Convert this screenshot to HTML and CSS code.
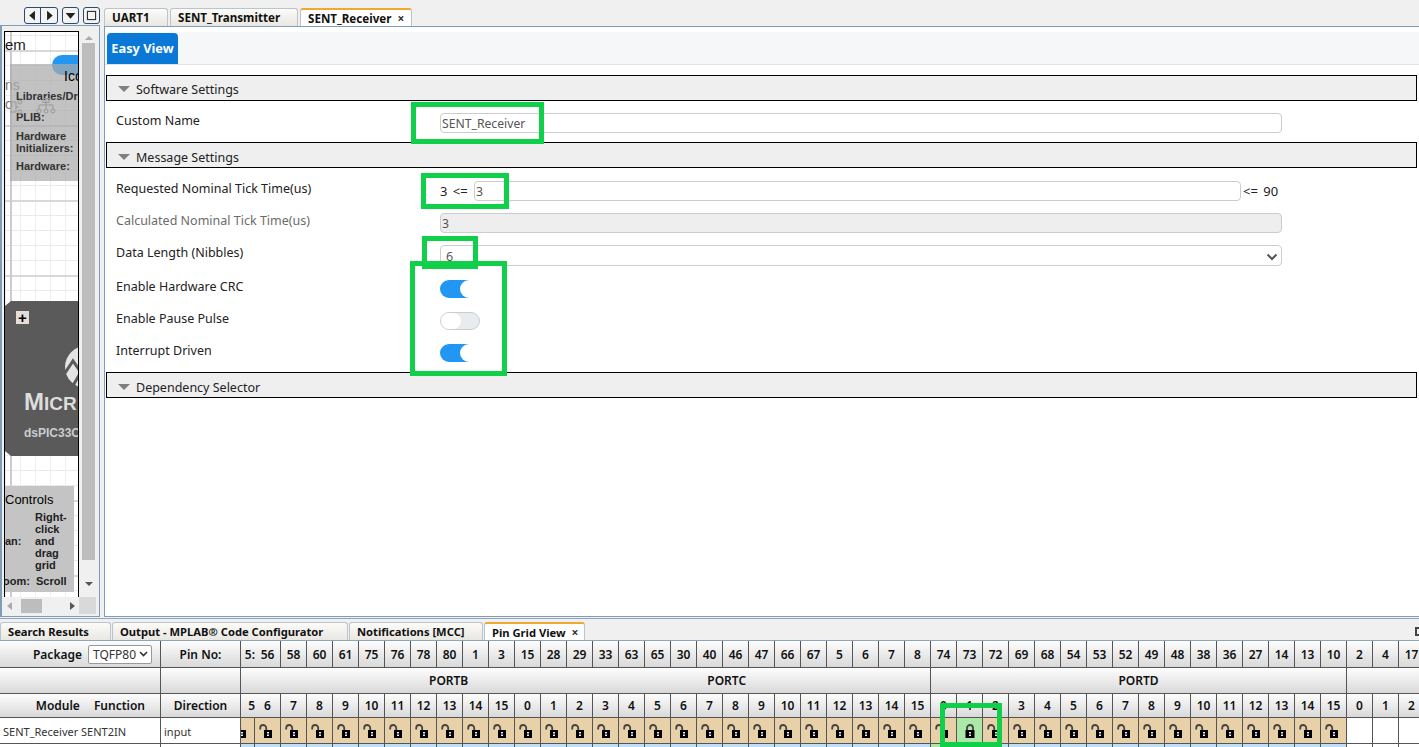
FILE: index.html
```html
<!DOCTYPE html>
<html lang="en">
<head>
    <meta charset="UTF-8">
    <meta name="viewport" content="width=device-width, initial-scale=1.0">
    <title>MPLAB Code Configurator</title>
    <link rel="stylesheet" href="styles.css">
</head>
<body>
    <div class="workspace">
        <div class="nav-pane">
            <div class="nav-tools">
                <div class="tool-group">
                    <button class="tool-btn" title="Back"><svg viewBox="0 0 16 16"><path d="M11 2v12L4 8z"></path></svg></button>
                    <button class="tool-btn" title="Forward"><svg viewBox="0 0 16 16"><path d="M5 2v12l7-6z"></path></svg></button>
                </div>
                <button class="tool-btn single" title="Menu"><svg viewBox="0 0 16 16"><path d="M2 5h12L8 12z"></path></svg></button>
                <button class="tool-btn single" title="Maximize"><svg viewBox="0 0 16 16"><rect x="3" y="3" width="10" height="10" fill="none" stroke="#333" stroke-width="1.4"></rect></svg></button>
            </div>
            <div class="nav-box">
                <div class="canvas">
                    <span class="canvas-title">em</span>
                    <span class="canvas-pill"></span>
                    <span class="canvas-ghost ghost-a">ns</span>
                    <span class="canvas-ghost ghost-b">o</span>
                    <div class="chip">
                        <span class="chip-plus">+</span>
                        <svg class="chip-mark" viewBox="0 0 30 44"><circle cx="22" cy="22" r="21" fill="#e4e4e4"></circle><path d="M-1 31L9 16l12 17M6 46l8-14 9 13" fill="none" stroke="#5a5a5a" stroke-width="3"></path></svg>
                        <span class="chip-brand">MICR</span>
                        <span class="chip-part">dsPIC33C</span>
                    </div>
                    <div class="resources">
                        <div class="res-head">Ico</div>
                        <div class="res-line">Libraries/Dri</div>
                        <div class="res-line plib">PLIB:</div>
                        <div class="res-line hw">Hardware<br>Initializers:</div>
                        <div class="res-line hw2">Hardware:</div>
                        <svg class="tree-icon tree-a" viewBox="0 0 20 16"><path d="M10 1v5M3 11V7h14v4M10 6v5" fill="none" stroke="#999"></path><rect x="7" y="0.5" width="6" height="4" fill="none" stroke="#999"></rect><circle cx="3" cy="13" r="2" fill="none" stroke="#999"></circle><circle cx="10" cy="13" r="2" fill="none" stroke="#999"></circle><circle cx="17" cy="13" r="2" fill="none" stroke="#999"></circle></svg>
                        <svg class="tree-icon tree-b" viewBox="0 0 13 16"><path d="M0 3h6v10H0M6 8h3" fill="none" stroke="#999"></path><circle cx="10" cy="3" r="2" fill="none" stroke="#999"></circle><circle cx="10" cy="13" r="2" fill="none" stroke="#999"></circle></svg>
                    </div>
                    <div class="controls">
                        <div class="controls-head">Controls</div>
                        <div class="controls-row pan"><span>an:</span><span>Right-<br>click<br>and<br>drag<br>grid</span></div>
                        <div class="controls-row zoom"><span>oom:</span><span>Scroll</span></div>
                    </div>
                </div>
                <div class="vscroll">
                    <span class="arrow-up"></span>
                    <span class="vthumb"></span>
                    <span class="arrow-down"></span>
                </div>
                <div class="hscroll">
                    <span class="arrow-left"></span>
                    <span class="hthumb"></span>
                    <span class="arrow-right"></span>
                    <span class="corner"></span>
                </div>
            </div>
        </div>

        <div class="editor">
            <div class="tabs top-tabs">
                <div class="tab tab-uart">UART1</div>
                <div class="tab tab-tx">SENT_Transmitter</div>
                <div class="tab tab-rx active">SENT_Receiver <span class="tab-close">×</span></div>
            </div>
            <div class="editor-body">
                <div class="view-strip">
                    <div class="view-tab">Easy View</div>
                </div>

                <div class="section-head"><span class="caret"></span>Software Settings</div>
                <div class="form-body first">
                    <div class="form-row">
                        <label>Custom Name</label>
                        <input class="field" value="SENT_Receiver">
                    </div>
                </div>

                <div class="section-head"><span class="caret"></span>Message Settings</div>
                <div class="form-body second">
                    <div class="form-row">
                        <label>Requested Nominal Tick Time(us)</label>
                        <div class="range-field">
                            <span class="range-min">3 &lt;=</span>
                            <input class="field" value="3">
                            <span class="range-max">&lt;= 90</span>
                        </div>
                    </div>
                    <div class="form-row">
                        <label class="muted">Calculated Nominal Tick Time(us)</label>
                        <input class="field disabled" value="3" disabled>
                    </div>
                    <div class="form-row tall">
                        <label>Data Length (Nibbles)</label>
                        <div class="select-field">6
                            <svg viewBox="0 0 12 8"><path d="M1.5 1.5L6 6l4.5-4.5" fill="none" stroke="#555" stroke-width="2"></path></svg>
                        </div>
                    </div>
                    <div class="form-row">
                        <label>Enable Hardware CRC</label>
                        <span class="toggle on"></span>
                    </div>
                    <div class="form-row">
                        <label>Enable Pause Pulse</label>
                        <span class="toggle"></span>
                    </div>
                    <div class="form-row">
                        <label>Interrupt Driven</label>
                        <span class="toggle on"></span>
                    </div>
                </div>

                <div class="section-head"><span class="caret"></span>Dependency Selector</div>
            </div>
        </div>
    </div>

    <div class="tabs bottom-tabs">
        <div class="tab tab-search">Search Results</div>
        <div class="tab tab-output">Output - MPLAB® Code Configurator</div>
        <div class="tab tab-notes">Notifications [MCC]</div>
        <div class="tab tab-pins active">Pin Grid View <span class="tab-close">×</span></div>
        <span class="dock-icon"></span>
    </div>

    <div class="pin-grid" id="pin-grid"></div>

    <span class="mark mark-name"></span>
    <span class="mark mark-tick"></span>
    <span class="mark mark-length"></span>
    <span class="mark mark-toggles"></span>
    <span class="mark mark-pin"></span>

    <script src="script.js"></script>
</body>
</html>
```

FILE: styles.css
```css
* {
    margin: 0;
    padding: 0;
    box-sizing: border-box;
    font-family: 'Noto Sans', 'Open Sans', sans-serif;
}

html, body {
    height: 100%;
    overflow: hidden;
}

body {
    background-color: #f0f0f0;
    color: #1a1a1a;
    font-size: 12px;
}

.workspace {
    display: flex;
    height: 618px;
}

/* left navigator */
.nav-pane {
    width: 104px;
    display: flex;
    flex-direction: column;
}

.nav-tools {
    height: 25px;
    display: flex;
    justify-content: flex-end;
    align-items: flex-start;
    gap: 4px;
    padding: 7px 4px 0 0;
}

.tool-group {
    display: flex;
    border: 1px solid #2c4a6c;
    border-radius: 3px;
    background-color: #f4f4f4;
}

.tool-btn {
    width: 16px;
    height: 15px;
    border: none;
    background: transparent;
    display: flex;
    align-items: center;
    justify-content: center;
}

.tool-btn:first-child {
    border-right: 1px solid #2c4a6c;
}

.tool-btn.single {
    width: 17px;
    height: 17px;
    border: 1px solid #2c4a6c;
    border-radius: 3px;
    background-color: #f4f4f4;
}

.tool-btn svg {
    width: 13px;
    height: 13px;
    fill: #222;
}

.nav-box {
    position: relative;
    width: 100px;
    height: 592px;
    border: 1px solid #7f9db9;
    border-left-width: 2px;
    background-color: #f0f0f0;
}

.canvas {
    position: absolute;
    left: 2px;
    top: 5px;
    width: 75px;
    height: 568px;
    background-color: #fff;
    background-image:
        linear-gradient(90deg, transparent 5px, #ccc 5px, #ccc 7px, transparent 7px),
        linear-gradient(#d8d8d8 2px, transparent 2px),
        linear-gradient(#eaeaea 1px, transparent 1px),
        linear-gradient(90deg, #efefef 1px, transparent 1px);
    background-size: 100% 100%, 75px 75px, 15px 15px, 15px 15px;
    background-position: 0 0, 0 18px, 0 3px, 0 0;
    border-left: 1px solid #000;
    border-right: 1px solid #000;
    border-top: 1px solid #000;
    overflow: hidden;
}

.canvas * {
    font-family: 'Liberation Sans', sans-serif;
}

.canvas-title {
    position: absolute;
    left: 0;
    top: 4px;
    font-size: 15px;
}

.canvas-pill {
    position: absolute;
    left: 47px;
    top: 23px;
    width: 40px;
    height: 20px;
    border-radius: 10px;
    background-color: #2196f3;
}

.canvas-ghost {
    position: absolute;
    font-size: 14px;
    color: #777;
}

.ghost-a {
    left: 0;
    top: 45px;
}

.ghost-b {
    left: 0;
    top: 64px;
}

.chip {
    position: absolute;
    left: 0;
    top: 269px;
    width: 90px;
    height: 155px;
    background-color: #5a5a5a;
    clip-path: polygon(6px 0, 100% 0, 100% 100%, 6px 100%, 0 150px, 0 5px);
    color: #ddd;
}

.chip-plus {
    position: absolute;
    left: 11px;
    top: 10px;
    width: 13px;
    height: 13px;
    background-color: #e4ddd8;
    color: #000;
    font-size: 15px;
    font-weight: bold;
    line-height: 13px;
    text-align: center;
}

.chip-mark {
    position: absolute;
    left: 59px;
    top: 44px;
    width: 30px;
    height: 44px;
}

.chip-brand {
    display: block;
    position: absolute;
    left: 19px;
    top: 87px;
    font-size: 19px;
    font-weight: bold;
    white-space: nowrap;
    color: #ddd;
}

.chip-brand::first-letter {
    font-size: 24px;
}

.chip-part {
    position: absolute;
    left: 19px;
    top: 125px;
    font-size: 12px;
    font-weight: bold;
    white-space: nowrap;
    color: #ccc;
}

.resources {
    position: absolute;
    left: 5px;
    top: 32px;
    width: 80px;
    height: 117px;
    background-color: rgba(170, 170, 170, 0.72);
    font-size: 11px;
    color: #333;
}

.res-head {
    position: absolute;
    left: 54px;
    top: 4px;
    font-size: 14px;
    white-space: nowrap;
    color: #000;
}

.res-line {
    position: absolute;
    left: 6px;
    white-space: nowrap;
    font-weight: bold;
    line-height: 12px;
}

.res-line:nth-child(2) {
    top: 26px;
}

.plib {
    top: 47px;
}

.hw {
    top: 66px;
}

.hw2 {
    top: 96px;
}

.tree-icon {
    position: absolute;
    height: 16px;
}

.tree-a {
    left: 26px;
    top: 34px;
    width: 20px;
}

.tree-b {
    left: 0;
    top: 35px;
    width: 13px;
}

.controls {
    position: absolute;
    left: 0;
    top: 454px;
    width: 69px;
    height: 106px;
    background-color: #c4c4c4;
    font-size: 11px;
    color: #222;
}

.controls-head {
    position: absolute;
    left: 0;
    top: 6px;
    font-size: 13px;
    color: #000;
}

.controls-row {
    position: absolute;
    left: 0;
    font-weight: bold;
    line-height: 12px;
}

.controls-row span {
    position: absolute;
    white-space: nowrap;
}

.pan {
    top: 25px;
}

.pan span:first-child {
    left: 0;
    top: 24px;
}

.pan span:last-child {
    left: 30px;
    top: 0;
}

.zoom {
    top: 89px;
}

.zoom span:first-child {
    left: -2px;
    top: 0;
}

.zoom span:last-child {
    left: 31px;
    top: 0;
}

.vscroll {
    position: absolute;
    left: 78px;
    top: 5px;
    width: 18px;
    height: 568px;
    background-color: #f0f0f0;
}

.arrow-up, .arrow-down, .arrow-left, .arrow-right {
    position: absolute;
    width: 0;
    height: 0;
    border: 4px solid transparent;
}

.arrow-up {
    left: 5px;
    top: 1px;
    border-bottom: 4px solid #aaa;
}

.arrow-down {
    left: 5px;
    top: 551px;
    border-top: 4px solid #555;
}

.vthumb {
    position: absolute;
    left: 2px;
    top: 12px;
    width: 13px;
    height: 517px;
    background-color: #bdbdbd;
}

.hscroll {
    position: absolute;
    left: 2px;
    top: 571px;
    width: 94px;
    height: 18px;
    background-color: #f0f0f0;
}

.arrow-left {
    left: 3px;
    top: 5px;
    border-right: 5px solid #aaa;
    border-left: none;
}

.hthumb {
    position: absolute;
    left: 17px;
    top: 2px;
    width: 21px;
    height: 14px;
    background-color: #bdbdbd;
}

.arrow-right {
    left: 66px;
    top: 5px;
    border-left: 5px solid #555;
    border-right: none;
}

.corner {
    position: absolute;
    left: 75px;
    top: 0;
    width: 17px;
    height: 17px;
    background-color: #d9d9d9;
}

/* tabs */
.tabs {
    display: flex;
    align-items: flex-end;
}

.top-tabs {
    height: 26px;
    gap: 2px;
}

.bottom-tabs {
    position: relative;
    height: 22px;
    gap: 1px;
    border-top: 1px solid #8fa5ba;
}

.tab {
    height: 18px;
    display: flex;
    align-items: center;
    gap: 6px;
    padding-left: 7px;
    font-weight: bold;
    color: #111;
    white-space: nowrap;
    border: 1px solid #b9c4cf;
    border-bottom: none;
    border-radius: 3px 3px 0 0;
    background: linear-gradient(#fbfbf8, #e9e7e1);
}

.top-tabs .tab {
    font-size: 11.6px;
}

.bottom-tabs .tab {
    font-size: 11.2px;
}

.tab.active {
    background: #fff;
    border-top: 2px solid #f0a830;
}

.tab-close {
    font-size: 12px;
    color: #333;
    font-weight: bold;
}

.tab-uart { width: 64px; }
.tab-tx { width: 128px; }
.tab-rx { width: 112px; }
.tab-search { width: 111px; }
.tab-output { width: 236px; }
.tab-notes { width: 134px; }
.tab-pins { width: 101px; }

.dock-icon {
    position: absolute;
    right: -6px;
    top: 8px;
    width: 10px;
    height: 9px;
    border: 2px solid #444;
}

/* editor */
.editor {
    flex: 1;
    min-width: 0;
}

.editor-body {
    height: 591px;
    border-top: 1px solid #7f9db9;
    border-left: 1px solid #7f9db9;
    border-bottom: 1px solid #7f9db9;
    background-color: #fff;
}

.view-strip {
    height: 38px;
    padding: 6px 0 0 2px;
    background: linear-gradient(#fff 5px, #f6f7f9 5px);
    border-bottom: 1px solid #dfe3e8;
}

.view-tab {
    width: 71px;
    height: 31px;
    background-color: #0a78d7;
    border-radius: 4px 4px 0 0;
    color: #fff;
    font-size: 12.8px;
    font-weight: bold;
    line-height: 31px;
    text-align: center;
}

.section-head {
    height: 26px;
    margin: 10px 2px 0 1px;
    border: 1px solid #000;
    background-color: #efefef;
    display: flex;
    align-items: center;
    padding: 2px 0 0 11px;
    font-size: 12.5px;
    color: #222;
}

.form-body + .section-head {
    margin-top: 0;
    padding-top: 4px;
}

.caret {
    width: 0;
    height: 0;
    border-left: 6px solid transparent;
    border-right: 6px solid transparent;
    border-top: 6px solid #808080;
    margin-right: 6px;
}

.form-body {
    display: flex;
    flex-direction: column;
    gap: 12px;
}

.form-body.first {
    padding: 12px 0 9px;
}

.form-body.second {
    padding: 13px 0 9px;
}

.form-row {
    display: grid;
    grid-template-columns: 324px 842px;
    height: 20px;
    padding-left: 11px;
}

.form-row.tall {
    height: 21px;
    margin-bottom: 1px;
}

.form-row label {
    font-size: 12.5px;
    line-height: 16px;
    margin-top: -1px;
    padding-top: 1px;
    color: #222;
}

.form-row label.muted {
    color: #6b6b6b;
}

.field {
    width: 100%;
    height: 20px;
    border: 1px solid #ccc;
    border-radius: 4px;
    padding: 0 1px;
    font-size: 12.2px;
    color: #555;
    background-color: #fff;
    min-width: 0;
}

.field.disabled {
    background-color: #eee;
    color: #555;
}

.range-field {
    display: flex;
    align-items: center;
    font-size: 13px;
    width: 880px;
    word-spacing: 2px;
}

.range-min {
    width: 34px;
    flex-shrink: 0;
    color: #222;
}

.range-field .field {
    width: 767px;
    flex: none;
}

.range-max {
    margin-left: 2px;
    color: #222;
}

.select-field {
    height: 21px;
    border: 1px solid #ccc;
    border-radius: 4px;
    padding: 2px 0 0 5px;
    font-size: 12.5px;
    color: #555;
    display: flex;
    justify-content: space-between;
}

.select-field svg {
    width: 12px;
    height: 8px;
    margin: 5px 3px 0 0;
}

.toggle {
    position: relative;
    width: 40px;
    height: 18px;
    margin-top: 1px;
    border-radius: 9px;
    border: 1px solid #ccc;
    background-color: #e9ecef;
}

.toggle::after {
    content: "";
    position: absolute;
    left: 0;
    top: 0;
    width: 20px;
    height: 16px;
    border-radius: 8px;
    background-color: #fff;
}

.toggle.on {
    border: none;
    background: linear-gradient(90deg, #2196f3 30px, #fff 30px);
}

.toggle.on::after {
    left: 20px;
    width: 20px;
    height: 18px;
    border-radius: 9px;
}

/* pin grid */
.pin-grid {
    display: grid;
    grid-template-columns: 161px 80px 14px repeat(45, 26px);
    grid-template-rows: 27px 26px 24px 26px 26px;
    width: 1419px;
    overflow: hidden;
    background-color: #fff;
    border-top: 1px solid #8fa5ba;
    font-size: 12px;
}

.cell {
    border-right: 1px solid #555;
    border-bottom: 1px solid #555;
    display: flex;
    align-items: center;
    justify-content: center;
    overflow: hidden;
    white-space: nowrap;
    min-width: 0;
}

.head {
    background: linear-gradient(#fdfdfd, #d9d9d9);
    font-weight: 600;
    color: #111;
}

.no-line {
    border-right: none;
    justify-content: flex-end;
}

.package {
    gap: 6px;
    justify-content: flex-end;
    padding-right: 8px;
}

.package-select {
    width: 64px;
    height: 19px;
    border: 1px solid #999;
    border-radius: 2px;
    background-color: #fff;
    font-size: 12px;
    font-weight: normal;
    color: #333;
    display: flex;
    align-items: center;
    justify-content: space-between;
    padding: 0 3px 0 4px;
}

.package-select svg {
    width: 9px;
    height: 6px;
}

.module-head {
    gap: 14px;
    justify-content: flex-end;
    padding-right: 15px;
}

.ports {
    justify-content: flex-start;
    padding-left: 188px;
    gap: 239px;
}

.name-cell {
    justify-content: flex-start;
    padding: 1px 0 0 3px;
    font-size: 11px;
    color: #333;
}

.lock {
    background-color: #e8d0a8;
}

.lock.clip {
    justify-content: flex-end;
}

.lock.locked {
    background-color: #ace8a8;
}

.pin {
    background-color: #bcdffb;
}

.pin.locked {
    background-color: #ace8a8;
}

.lock svg {
    width: 14px;
    height: 15px;
    flex-shrink: 0;
    margin: 2px 0 0 -4px;
}

.lock.locked svg {
    margin-left: 0;
}

.lock.clip svg {
    margin-right: 7px;
}

/* review marks drawn over the screenshot */
.mark {
    position: absolute;
    border: 5px solid #10d04a;
}

.mark-name { left: 411px; top: 102px; width: 133px; height: 42px; }
.mark-tick { left: 421px; top: 173px; width: 88px; height: 36px; }
.mark-length { left: 422px; top: 236px; width: 56px; height: 33px; }
.mark-toggles { left: 410px; top: 261px; width: 97px; height: 115px; }
.mark-pin { left: 940px; top: 703px; width: 62px; height: 44px; }
```

FILE: script.js
```js
const pinNumbers = [56, 58, 60, 61, 75, 76, 78, 80, 1, 3, 15, 28, 29, 33, 63, 65, 30, 40, 46, 47, 66, 67, 5, 6, 7, 8,
    74, 73, 72, 69, 68, 54, 53, 52, 49, 48, 38, 36, 27, 14, 13, 10, 2, 4, 17];
const bits = [6, 7, 8, 9, 10, 11, 12, 13, 14, 15,
    0, 1, 2, 3, 4, 5, 6, 7, 8, 9, 10, 11, 12, 13, 14, 15,
    0, 1, 2, 3, 4, 5, 6, 7, 8, 9, 10, 11, 12, 13, 14, 15,
    0, 1, 2];

const openLock = '<svg viewBox="0 0 14 15"><path d="M1.2 5.5V4a3 3 0 0 1 6 0V6" fill="none" stroke="#444" stroke-width="1.8"></path><rect x="5" y="6" width="8" height="8" fill="#000"></rect><rect x="8" y="8" width="2" height="1.5" fill="#eee"></rect><rect x="8" y="10.5" width="2" height="1.5" fill="#eee"></rect></svg>';
const closedLock = '<svg viewBox="0 0 14 15"><path d="M4 7V4a3 3 0 0 1 6 0V7" fill="none" stroke="#444" stroke-width="1.8"></path><rect x="2.5" y="6" width="9" height="8" fill="#000"></rect><rect x="6" y="8" width="2" height="1.5" fill="#eee"></rect><rect x="6" y="10.5" width="2" height="1.5" fill="#eee"></rect></svg>';

const grid = document.getElementById('pin-grid');

function addCell(className, html = '', span = 1) {
    const cell = document.createElement('div');
    cell.className = 'cell ' + className;
    cell.innerHTML = html;
    if (span > 1) cell.style.gridColumn = 'span ' + span;
    grid.appendChild(cell);
}

// row 1: package and pin numbers
addCell('head package', 'Package <span class="package-select">TQFP80<svg viewBox="0 0 9 6"><path d="M1 1l3.5 3.5L8 1" fill="none" stroke="#333" stroke-width="1.6"></path></svg></span>');
addCell('head', 'Pin No:');
addCell('head no-line', '5:');
pinNumbers.forEach(n => addCell('head', n));

// row 2: ports
addCell('head');
addCell('head');
addCell('head ports', '<span>PORTB</span><span>PORTC</span>', 27);
addCell('head', 'PORTD', 16);
addCell('head', '', 3);

// row 3: bit numbers
addCell('head module-head', '<span>Module</span><span>Function</span>');
addCell('head', 'Direction');
addCell('head no-line', '5');
bits.forEach(n => addCell('head', n));

// row 4: SENT2IN locks
addCell('name-cell', 'SENT_Receiver SENT2IN');
addCell('name-cell', 'input');
addCell('lock clip', openLock);
bits.forEach((n, i) => {
    if (i > 41) addCell('');
    else if (i === 27) addCell('lock locked', closedLock);
    else addCell('lock', openLock);
});

// row 5: next function, only the top of it is on screen
addCell('name-cell');
addCell('name-cell');
addCell('pin');
bits.forEach((n, i) => {
    if (i > 41) addCell('');
    else if (i === 26) addCell('pin locked');
    else addCell('pin');
});
```
